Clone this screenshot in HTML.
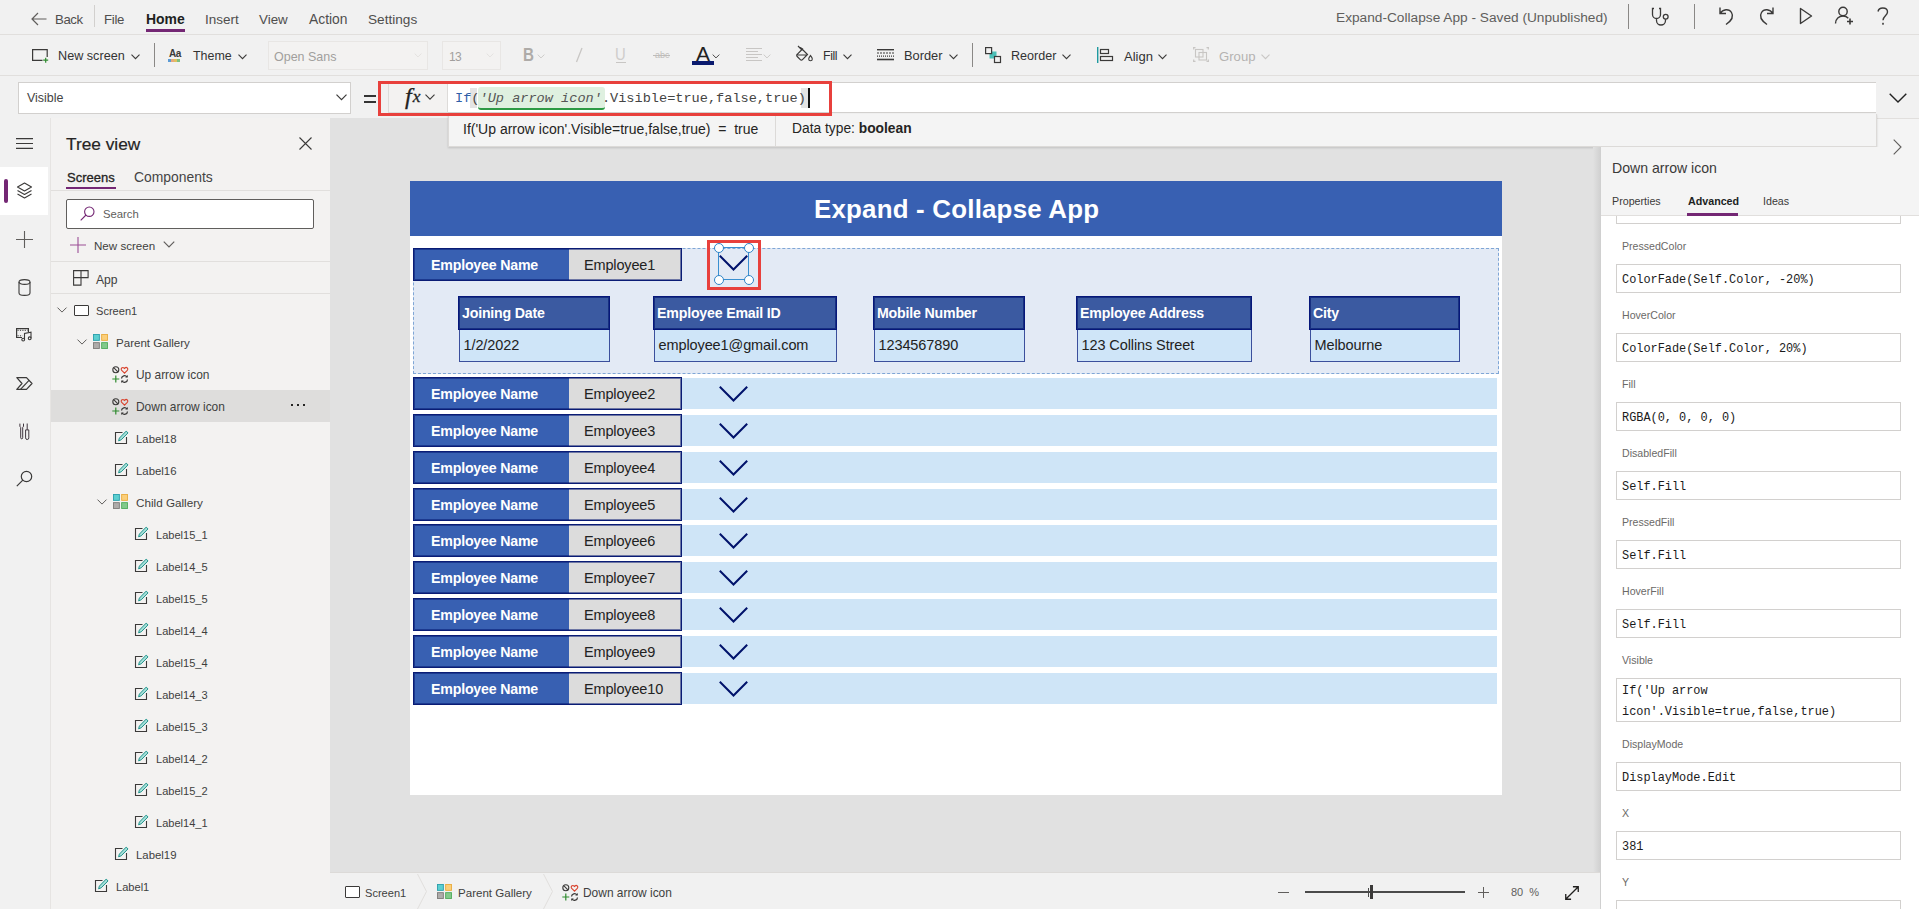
<!DOCTYPE html>
<html>
<head>
<meta charset="utf-8">
<title>Power Apps</title>
<style>
*{box-sizing:border-box;margin:0;padding:0}
html,body{width:1919px;height:909px;overflow:hidden;background:#e1e1e1;font-family:"Liberation Sans",sans-serif;color:#333}
.abs{position:absolute}
#root{position:relative;width:1919px;height:909px;overflow:hidden}
/* top bars */
#topbar{left:0;top:0;width:1919px;height:35px;background:#f1f1f1;border-bottom:1px solid #e1dfdd}
#ribbon{left:0;top:35px;width:1919px;height:41px;background:#f1f1f1;border-bottom:1px solid #e1dfdd}
#fbar{left:0;top:76px;width:1919px;height:42px;background:#f1f1f1}
.t{position:absolute;white-space:nowrap;line-height:1}
.menu{font-size:14px;color:#4f4e4d;top:12.5px}
.rib{font-size:13px;color:#333;top:49.5px}
.dis{color:#b5b3b1}
svg{position:absolute;overflow:visible}
/* left */
#rail{left:0;top:118px;width:50px;height:791px;background:#f1f1f1}
#tree{left:50px;top:118px;width:280px;height:791px;background:#f3f2f1;border-left:1px solid #e6e4e2}
.tn{font-size:11.4px;color:#403f3e;margin-top:1.700px}
/* canvas */
#stage{left:330px;top:118px;width:1270px;height:755px;background:#e1e1e1}
#app{left:410px;top:181px;width:1092px;height:614px;background:#fff}
#apphdr{left:410px;top:181px;width:1092px;height:55px;background:#3860b2}
.row{position:absolute;left:416px;width:1081px;height:31px;background:#cfe5f7}
.en{position:absolute;left:413px;width:269px;height:33px;border:1px solid #0a1c75;background:#dcdcdc}
.en:after{content:"";position:absolute;left:0;top:0;right:0;bottom:0;box-shadow:inset 0 0 0 1px rgba(0,18,107,.5)}
.en .l{position:absolute;left:0;top:0;width:155px;height:31px;background:#3860b2;color:#fff;font-weight:bold;font-size:14.2px;line-height:32px;padding-left:17px;letter-spacing:-0.2px}
.en .v{position:absolute;left:155px;top:0;width:112px;height:31px;color:#222;font-size:14.5px;line-height:32px;padding-left:15px;letter-spacing:-0.15px}
.card{position:absolute;height:66px}
.card .h{position:absolute;left:0;top:0;right:0;height:34px;background:#3b5aa1;border:1px solid #06177a;box-shadow:inset 0 0 0 1px rgba(0,18,107,.6);color:#fff;font-weight:bold;font-size:14.2px;line-height:33px;padding-left:3px;letter-spacing:-0.2px}
.card .b{position:absolute;left:.5px;top:34px;right:0;height:32px;background:#cfe5f8;border:1.300px solid #3b4f9c;border-top:none;color:#222;font-size:14.5px;line-height:30px;padding-left:4px;letter-spacing:-0.1px}
/* right panel */
#rp{left:1600px;top:147px;width:319px;height:762px;background:#fff;border-left:1px solid #d8d6d4}
#rph{left:1601px;top:147px;width:318px;height:69px;background:#f4f4f4;border-bottom:1px solid #e1dfdd}
.pl{position:absolute;left:1622px;font-size:10.6px;color:#6b6967;white-space:nowrap;line-height:1;margin-top:1px}
.pi{position:absolute;left:1616px;width:285px;height:29px;border:1px solid #d2d0ce;background:#fff;font-family:"Liberation Mono",monospace;font-size:11.9px;color:#1b1b1b;line-height:31px;padding-left:5px;white-space:nowrap}
/* bottom */
#bbar{left:330px;top:872px;width:1270px;height:37px;background:#f1f1f1;border-top:1px solid #dcdad8}
</style>
</head>
<body>
<div id="root">

<!-- ===== STAGE ===== -->
<div id="stage" class="abs"></div>
<div id="app" class="abs"></div>
<div id="apphdr" class="abs"></div>
<div class="t" style="left:814px;top:197px;font-size:25.900px;font-weight:bold;color:#fff;letter-spacing:.2px">Expand - Collapse App</div>
<div class="abs" style="left:413px;top:248px;width:1086px;height:126px;background:#e3eaf5;border:1px dashed #7fa6d6"></div>
<div class="row" style="top:378px"></div>
<div class="row" style="top:415px"></div>
<div class="row" style="top:452px"></div>
<div class="row" style="top:489px"></div>
<div class="row" style="top:525px"></div>
<div class="row" style="top:562px"></div>
<div class="row" style="top:599px"></div>
<div class="row" style="top:636px"></div>
<div class="row" style="top:673px"></div>
<div class="en" style="top:248px"><div class="l">Employee Name</div><div class="v">Employee1</div></div>
<div class="en" style="top:377px"><div class="l">Employee Name</div><div class="v">Employee2</div></div>
<svg style="left:719px;top:386px" width="29" height="16" viewBox="0 0 29 16"><path d="M.8.800L14.500 14.500 28.200.8" fill="none" stroke="#00126b" stroke-width="2"/></svg>
<div class="en" style="top:414px"><div class="l">Employee Name</div><div class="v">Employee3</div></div>
<svg style="left:719px;top:423px" width="29" height="16" viewBox="0 0 29 16"><path d="M.8.800L14.500 14.500 28.200.8" fill="none" stroke="#00126b" stroke-width="2"/></svg>
<div class="en" style="top:451px"><div class="l">Employee Name</div><div class="v">Employee4</div></div>
<svg style="left:719px;top:460px" width="29" height="16" viewBox="0 0 29 16"><path d="M.8.800L14.500 14.500 28.200.8" fill="none" stroke="#00126b" stroke-width="2"/></svg>
<div class="en" style="top:488px"><div class="l">Employee Name</div><div class="v">Employee5</div></div>
<svg style="left:719px;top:497px" width="29" height="16" viewBox="0 0 29 16"><path d="M.8.800L14.500 14.500 28.200.8" fill="none" stroke="#00126b" stroke-width="2"/></svg>
<div class="en" style="top:524px"><div class="l">Employee Name</div><div class="v">Employee6</div></div>
<svg style="left:719px;top:533px" width="29" height="16" viewBox="0 0 29 16"><path d="M.8.800L14.500 14.500 28.200.8" fill="none" stroke="#00126b" stroke-width="2"/></svg>
<div class="en" style="top:561px"><div class="l">Employee Name</div><div class="v">Employee7</div></div>
<svg style="left:719px;top:570px" width="29" height="16" viewBox="0 0 29 16"><path d="M.8.800L14.500 14.500 28.200.8" fill="none" stroke="#00126b" stroke-width="2"/></svg>
<div class="en" style="top:598px"><div class="l">Employee Name</div><div class="v">Employee8</div></div>
<svg style="left:719px;top:607px" width="29" height="16" viewBox="0 0 29 16"><path d="M.8.800L14.500 14.500 28.200.8" fill="none" stroke="#00126b" stroke-width="2"/></svg>
<div class="en" style="top:635px"><div class="l">Employee Name</div><div class="v">Employee9</div></div>
<svg style="left:719px;top:644px" width="29" height="16" viewBox="0 0 29 16"><path d="M.8.800L14.500 14.500 28.200.8" fill="none" stroke="#00126b" stroke-width="2"/></svg>
<div class="en" style="top:672px"><div class="l">Employee Name</div><div class="v">Employee10</div></div>
<svg style="left:719px;top:681px" width="29" height="16" viewBox="0 0 29 16"><path d="M.8.800L14.500 14.500 28.200.8" fill="none" stroke="#00126b" stroke-width="2"/></svg>
<div class="card" style="left:458px;top:296px;width:152px"><div class="h">Joining Date</div><div class="b">1/2/2022</div></div>
<div class="card" style="left:653px;top:296px;width:184px"><div class="h">Employee Email ID</div><div class="b">employee1@gmail.com</div></div>
<div class="card" style="left:873px;top:296px;width:152px"><div class="h">Mobile Number</div><div class="b">1234567890</div></div>
<div class="card" style="left:1076px;top:296px;width:176px"><div class="h">Employee Address</div><div class="b">123 Collins Street</div></div>
<div class="card" style="left:1309px;top:296px;width:151px"><div class="h">City</div><div class="b">Melbourne</div></div>
<svg style="left:719px;top:255px" width="29" height="16" viewBox="0 0 29 16"><path d="M.8.800L14.500 14.500 28.200.8" fill="none" stroke="#00126b" stroke-width="2"/></svg>
<div class="abs" style="left:718px;top:247px;width:31px;height:33px;border:1px solid #3a8fd0"></div>
<div class="abs" style="left:713.5px;top:243.0px;width:10px;height:10px;border-radius:50%;background:#fff;border:1.300px solid #2f84c8"></div>
<div class="abs" style="left:744.0px;top:243.0px;width:10px;height:10px;border-radius:50%;background:#fff;border:1.300px solid #2f84c8"></div>
<div class="abs" style="left:713.5px;top:275.0px;width:10px;height:10px;border-radius:50%;background:#fff;border:1.300px solid #2f84c8"></div>
<div class="abs" style="left:744.0px;top:275.0px;width:10px;height:10px;border-radius:50%;background:#fff;border:1.300px solid #2f84c8"></div>
<div class="abs" style="left:707px;top:240px;width:54px;height:50px;border:3px solid #e8403c"></div>
<!-- STAGE-END -->

<!-- ===== TOP BAR ===== -->
<div id="topbar" class="abs"></div>
<div id="ribbon" class="abs"></div>
<div id="fbar" class="abs"></div>
<!-- topbar items -->
<svg style="left:31px;top:12px" width="16" height="14" viewBox="0 0 16 14"><path d="M15.5 7H1M7 1L1 7l6 6" fill="none" stroke="#605e5c" stroke-width="1.2"/></svg>
<div class="t menu" style="left:55px;font-size:13.2px;letter-spacing:-.4px">Back</div>
<div class="abs" style="left:94px;top:5px;width:1px;height:22px;background:#d2d0ce"></div>
<div class="t menu" style="left:104px;font-size:13.2px;letter-spacing:-.3px">File</div>
<div class="t menu" style="left:146px;font-weight:bold;color:#201f1e;font-size:13.94px">Home</div>
<div class="abs" style="left:146px;top:29px;width:39px;height:3px;background:#742774"></div>
<div class="t menu" style="left:205px;font-size:13.49px">Insert</div>
<div class="t menu" style="left:259px;font-size:13.37px">View</div>
<div class="t menu" style="left:309px;font-size:13.85px">Action</div>
<div class="t menu" style="left:368px;font-size:13.63px">Settings</div>
<div class="t menu" style="left:1336px;top:10.500px;color:#605e5c;font-size:13.700px">Expand-Collapse App - Saved (Unpublished)</div>
<div class="abs" style="left:1628px;top:4px;width:1px;height:25px;background:#8a8886"></div>
<div class="abs" style="left:1694px;top:4px;width:1px;height:25px;background:#8a8886"></div>
<!-- stethoscope -->
<svg style="left:1651px;top:7px" width="22" height="20" viewBox="0 0 22 20"><path d="M3 1.5H1.5V7.5a4 4 0 0 0 8 0V1.5H8M5.5 11.5v2a4.5 4.5 0 0 0 9 0v-1.2" fill="none" stroke="#3b3a39" stroke-width="1.3"/><circle cx="14.7" cy="9.8" r="2.4" fill="none" stroke="#3b3a39" stroke-width="1.3"/></svg>
<!-- undo -->
<svg style="left:1718px;top:6px" width="18" height="20" viewBox="0 0 18 20"><path d="M2 1.5v6h6M2 7.5C5 3 11 2.500 13.500 6.500S13 15 8 18.500" fill="none" stroke="#3b3a39" stroke-width="1.4"/></svg>
<!-- redo -->
<svg style="left:1757px;top:6px" width="18" height="20" viewBox="0 0 18 20"><path d="M16 1.5v6h-6M16 7.5C13 3 7 2.500 4.500 6.500S5 15 10 18.500" fill="none" stroke="#3b3a39" stroke-width="1.4"/></svg>
<!-- play -->
<svg style="left:1799px;top:7px" width="14" height="18" viewBox="0 0 14 18"><path d="M1.500 1.500L12.500 9 1.500 16.500z" fill="none" stroke="#3b3a39" stroke-width="1.4" stroke-linejoin="round"/></svg>
<!-- user+ -->
<svg style="left:1834px;top:6px" width="22" height="20" viewBox="0 0 22 20"><circle cx="9" cy="5.500" r="4.200" fill="none" stroke="#3b3a39" stroke-width="1.4"/><path d="M1.500 17.500c0-4.500 3.500-7.500 7.500-7.500 2.200 0 4 .8 5.300 2.200" fill="none" stroke="#3b3a39" stroke-width="1.400"/><path d="M16 12.500v6M13 15.500h6" fill="none" stroke="#3b3a39" stroke-width="1.600"/></svg>
<svg style="left:1877px;top:7px" width="12" height="19" viewBox="0 0 12 19"><path d="M1 4.500C1.500 2 3.500 1 5.800 1c2.700 0 4.700 1.600 4.700 4 0 3.500-4.500 4-4.500 8.300" fill="none" stroke="#3b3a39" stroke-width="1.400"/><rect x="5.200" y="15.800" width="1.600" height="1.900" fill="#3b3a39"/></svg>

<!-- ribbon items -->
<svg style="left:32px;top:49px" width="17" height="14" viewBox="0 0 17 14"><path d="M10.500 11.400H.6V.6h14.600v7.500" fill="none" stroke="#3b3a39" stroke-width="1.200"/><path d="M13.700 8.700v5M11.200 11.200h5" stroke="#2e8b2e" stroke-width="1.200" fill="none"/></svg>
<div class="t rib" style="left:58px;font-size:12.65px">New screen</div>
<svg class="chev" style="left:131px;top:54px" width="9" height="6" viewBox="0 0 9 6"><path d="M.5.700l4 4 4-4" fill="none" stroke="#3b3a39" stroke-width="1.100"/></svg>
<div class="abs" style="left:154px;top:43px;width:1px;height:24px;background:#8a8886"></div>
<div class="t" style="left:169px;top:49px;font-size:10px;font-weight:bold;color:#3b3a39;letter-spacing:-.5px">Aa</div>
<div class="abs" style="left:168px;top:59px;width:3px;height:2.500px;background:#5b9bd5"></div><div class="abs" style="left:171px;top:59px;width:3px;height:2.500px;background:#e8a87c"></div><div class="abs" style="left:174px;top:59px;width:3px;height:2.500px;background:#e0c060"></div><div class="abs" style="left:177px;top:59px;width:3px;height:2.500px;background:#7fbf7f"></div>
<div class="t rib" style="left:193px;font-size:12.45px">Theme</div>
<svg style="left:238px;top:54px" width="9" height="6" viewBox="0 0 9 6"><path d="M.5.700l4 4 4-4" fill="none" stroke="#3b3a39" stroke-width="1.100"/></svg>
<div class="abs" style="left:268px;top:41px;width:160px;height:29px;background:#f3f2f1;border:1px solid #e8e6e4"></div>
<div class="t rib" style="left:274px;top:50.500px;color:#a19f9d;font-size:12.49px">Open Sans</div>
<svg style="left:414px;top:53px" width="8" height="5" viewBox="0 0 9 6"><path d="M.5.700l4 4 4-4" fill="none" stroke="#e1dfdd" stroke-width="1.100"/></svg>
<div class="abs" style="left:442px;top:41px;width:59px;height:29px;background:#f3f2f1;border:1px solid #e8e6e4"></div>
<div class="t rib" style="left:449px;top:50.500px;color:#a19f9d;font-size:12px;letter-spacing:-.6px">13</div>
<svg style="left:486px;top:53px" width="8" height="5" viewBox="0 0 9 6"><path d="M.5.700l4 4 4-4" fill="none" stroke="#e1dfdd" stroke-width="1.100"/></svg>
<div class="t" style="left:523px;top:46px;font-size:18.500px;color:#aeaba8;font-weight:bold;transform:scaleX(.82);transform-origin:left">B</div>
<svg style="left:537px;top:54px" width="8" height="5" viewBox="0 0 9 6"><path d="M.5.700l4 4 4-4" fill="none" stroke="#c8c6c4" stroke-width="1.100"/></svg>
<svg style="left:574px;top:47px" width="10" height="16" viewBox="0 0 10 16"><path d="M8 1L2.500 15" stroke="#c8c6c4" stroke-width="1.300" fill="none"/></svg>
<div class="t" style="left:615px;top:46px;font-size:16.500px;color:#cfcdcb;transform:scaleX(.9);transform-origin:left">U</div>
<div class="abs" style="left:616px;top:62px;width:10px;height:1px;background:#c8c6c4"></div>
<div class="t" style="left:655px;top:51px;font-size:9px;color:#bebcba;text-decoration:line-through">abc</div><div class="abs" style="left:653px;top:55px;width:17px;height:1px;background:#bebcba"></div>
<div class="t" style="left:696px;top:43px;font-size:21px;color:#222">A</div>
<div class="abs" style="left:692px;top:61px;width:22px;height:4px;background:#0a1a6e"></div>
<svg style="left:712px;top:54px" width="8" height="5" viewBox="0 0 9 6"><path d="M.5.700l4 4 4-4" fill="none" stroke="#3b3a39" stroke-width="1.100"/></svg>
<svg style="left:746px;top:48px" width="17" height="13" viewBox="0 0 17 13"><path d="M0 .5h16M0 3.500h12M0 6.500h16M0 9.500h12M0 12.500h16" stroke="#c8c6c4" stroke-width="1" fill="none"/></svg>
<svg style="left:763px;top:54px" width="8" height="5" viewBox="0 0 9 6"><path d="M.5.700l4 4 4-4" fill="none" stroke="#c8c6c4" stroke-width="1.100"/></svg>
<!-- fill -->
<svg style="left:796px;top:45px" width="18" height="17" viewBox="0 0 18 17"><path d="M4.500 2.500l7 7-5 5.200a1.500 1.500 0 0 1-2.200 0L1.200 11.500a1.500 1.500 0 0 1 0-2.200L7 3.500M2 1l4 4M1.500 10h9" fill="none" stroke="#3b3a39" stroke-width="1.200"/><path d="M14.500 10.500c1 1.500 1.800 2.500 1.800 3.500a1.800 1.800 0 0 1-3.600 0c0-1 .8-2 1.800-3.500z" fill="none" stroke="#3b3a39" stroke-width="1.100"/></svg>
<div class="t rib" style="left:823px;font-size:12.4px;letter-spacing:-.4px">Fill</div>
<svg style="left:843px;top:54px" width="9" height="6" viewBox="0 0 9 6"><path d="M.5.700l4 4 4-4" fill="none" stroke="#3b3a39" stroke-width="1.100"/></svg>
<!-- border -->
<svg style="left:877px;top:49px" width="17" height="12" viewBox="0 0 17 12"><path d="M0 .7h17" stroke="#3b3a39" stroke-width="1.400"/><path d="M0 4h17" stroke="#3b3a39" stroke-width="1.200" stroke-dasharray="2 1"/><path d="M0 7.200h17" stroke="#3b3a39" stroke-width="1.200" stroke-dasharray="1 1"/><path d="M0 10.500h17" stroke="#3b3a39" stroke-width="1.600"/></svg>
<div class="t rib" style="left:904px;font-size:12.82px">Border</div>
<svg style="left:949px;top:54px" width="9" height="6" viewBox="0 0 9 6"><path d="M.5.700l4 4 4-4" fill="none" stroke="#3b3a39" stroke-width="1.100"/></svg>
<div class="abs" style="left:972px;top:43px;width:1px;height:24px;background:#8a8886"></div>
<!-- reorder -->
<svg style="left:985px;top:47px" width="17" height="16" viewBox="0 0 17 16"><rect x="4.500" y="4.500" width="7" height="7" fill="#4cc0b8"/><rect x=".6" y=".6" width="6" height="6" fill="#f1f1f1" stroke="#3b3a39" stroke-width="1.200"/><rect x="9.500" y="9.500" width="6" height="6" fill="#f1f1f1" stroke="#3b3a39" stroke-width="1.200"/></svg>
<div class="t rib" style="left:1011px;font-size:12.59px">Reorder</div>
<svg style="left:1062px;top:54px" width="9" height="6" viewBox="0 0 9 6"><path d="M.5.700l4 4 4-4" fill="none" stroke="#3b3a39" stroke-width="1.100"/></svg>
<!-- align -->
<svg style="left:1097px;top:47px" width="17" height="16" viewBox="0 0 17 16"><path d="M.7 0v16" stroke="#1f9aa0" stroke-width="1.400"/><rect x="3.500" y="2.500" width="8" height="4" fill="none" stroke="#3b3a39" stroke-width="1.200"/><rect x="3.500" y="9.500" width="12" height="4" fill="none" stroke="#3b3a39" stroke-width="1.200"/></svg>
<div class="t rib" style="left:1124px;font-size:13.04px">Align</div>
<svg style="left:1158px;top:54px" width="9" height="6" viewBox="0 0 9 6"><path d="M.5.700l4 4 4-4" fill="none" stroke="#3b3a39" stroke-width="1.100"/></svg>
<!-- group -->
<svg style="left:1193px;top:47px" width="17" height="16" viewBox="0 0 17 16"><path d="M0 .7h2.500M.7 0v2.500M13.500.7H16M15.300 0v2.500M0 14.300h2.500M.7 12.500V15M13.500 14.300H16M15.300 12.500V15" stroke="#c8c6c4" stroke-width="1.200" fill="none"/><rect x="2.500" y="2.500" width="7.500" height="7.500" fill="none" stroke="#c8c6c4" stroke-width="1.100"/><rect x="6" y="5.500" width="7.500" height="7.500" fill="none" stroke="#c8c6c4" stroke-width="1.100"/></svg>
<div class="t rib dis" style="left:1219px;font-size:13.13px">Group</div>
<svg style="left:1261px;top:54px" width="9" height="6" viewBox="0 0 9 6"><path d="M.5.700l4 4 4-4" fill="none" stroke="#c8c6c4" stroke-width="1.100"/></svg>

<!-- formula bar -->
<div class="abs" style="left:18px;top:82px;width:333px;height:32px;background:#fff;border:1px solid #d2d0ce"></div>
<div class="t" style="left:27px;top:92px;color:#444;font-size:12.46px">Visible</div>
<svg style="left:336px;top:94px" width="11" height="7" viewBox="0 0 11 7"><path d="M.5.700l5 5 5-5" fill="none" stroke="#3b3a39" stroke-width="1.200"/></svg>
<div class="abs" style="left:364px;top:95px;width:12px;height:2px;background:#333"></div>
<div class="abs" style="left:364px;top:101px;width:12px;height:2px;background:#333"></div>
<div class="abs" style="left:388px;top:82px;width:1488px;height:31px;background:#fff;border-top:1px solid #d2d0ce;border-bottom:1px solid #d2d0ce"></div>
<div class="abs" style="left:388px;top:82px;width:60px;height:31px;background:#f3f2f1;border:1px solid #dddbd9"></div>
<div class="t" style="left:405px;top:84px;font-size:24px;font-style:italic;font-family:'Liberation Serif',serif;color:#222;-webkit-text-stroke:.3px #222">f<span style="font-size:17.500px;position:relative;top:-2px;left:1px">x</span></div>
<svg style="left:425px;top:94px" width="10" height="6" viewBox="0 0 10 6"><path d="M.5.700l4.500 4.500L9.500.7" fill="none" stroke="#3b3a39" stroke-width="1.100"/></svg>
<div class="abs" style="left:470px;top:88px;width:7px;height:20px;background:#e4e4e4"></div>
<div class="abs" style="left:801px;top:88px;width:7px;height:20px;background:#e4e4e4"></div>
<div class="abs" style="left:478px;top:87px;width:127px;height:23px;background:#dff0e0;border-radius:3px;border-bottom:2px solid #2c9a44"></div>
<div class="t" style="left:455px;top:92px;font-size:13.600px;font-family:'Liberation Mono',monospace;color:#444"><span style="color:#2f5fa8">If</span>(<i style="color:#555">'Up arrow icon'</i>.Visible=true,false,true)</div>
<div class="abs" style="left:808px;top:88px;width:2px;height:20px;background:#111"></div>
<div class="abs" style="left:1876px;top:118px;width:43px;height:30px;background:#f4f4f4;border-top:1px solid #e1dfdd"></div>
<!-- result strip -->
<div class="abs" style="left:448px;top:114px;width:1429px;height:33px;background:#f4f4f4;border:1px solid #dcdad8;border-top:none;box-shadow:0 1px 2px rgba(0,0,0,.15)"></div>
<div class="abs" style="left:775px;top:114px;width:1px;height:32px;background:#dcdad8"></div>
<div class="t" style="left:463px;top:122px;font-size:14px;color:#252423">If('Up arrow icon'.Visible=true,false,true)&nbsp; =&nbsp; true</div>
<div class="t" style="left:792px;top:122px;font-size:13.800px;color:#252423">Data type: <b>boolean</b></div>
<div class="abs" style="left:378px;top:81px;width:454px;height:35px;border:3px solid #e8403c"></div>
<svg style="left:1889px;top:93px" width="18" height="10" viewBox="0 0 18 10"><path d="M.7.700L9 9 17.300.7" fill="none" stroke="#222" stroke-width="1.400"/></svg>


<!-- ===== LEFT ===== -->
<div id="rail" class="abs"></div>
<div id="tree" class="abs"></div>
<svg style="left:16px;top:138px" width="17" height="11" viewBox="0 0 17 11"><path d="M0 .6h17M0 5.500h17M0 10.400h17" stroke="#3b3a39" stroke-width="1.100"/></svg>
<div class="abs" style="left:0;top:167px;width:48px;height:48px;background:#fff"></div>
<div class="abs" style="left:4px;top:179px;width:4px;height:24px;background:#742774;border-radius:2px"></div>
<svg style="left:16px;top:182px" width="17" height="18" viewBox="0 0 17 18"><path d="M8.500 1L15.500 5 8.500 9 1.500 5z" fill="none" stroke="#3b3a39" stroke-width="1.100" stroke-linejoin="round"/><path d="M1.500 8.500L8.500 12.500 15.500 8.500M1.500 12L8.500 16 15.500 12" fill="none" stroke="#3b3a39" stroke-width="1.100" stroke-linejoin="round"/></svg>
<svg style="left:16px;top:231px" width="17" height="17" viewBox="0 0 17 17"><path d="M8.500 0v17M0 8.500h17" stroke="#605e5c" stroke-width="1.100"/></svg>
<svg style="left:18px;top:279px" width="13" height="17" viewBox="0 0 13 17"><ellipse cx="6.500" cy="3" rx="5.500" ry="2.400" fill="none" stroke="#3b3a39" stroke-width="1.100"/><path d="M1 3v11c0 1.300 2.500 2.400 5.500 2.400s5.500-1.100 5.500-2.400V3" fill="none" stroke="#3b3a39" stroke-width="1.100"/></svg>
<svg style="left:16px;top:328px" width="17" height="14" viewBox="0 0 17 14"><path d="M6 9.500H.6V.6h11.800V4" fill="none" stroke="#3b3a39" stroke-width="1.200"/><path d="M1.500 2.300h10M1.500 7.800h5" stroke="#3b3a39" stroke-width="1" stroke-dasharray="1.200 1.200"/><path d="M8.500 11.500V5.500l6.500-1.300v6" fill="none" stroke="#3b3a39" stroke-width="1.100"/><circle cx="7.200" cy="11.600" r="1.400" fill="none" stroke="#3b3a39" stroke-width="1.100"/><circle cx="13.700" cy="10.300" r="1.400" fill="none" stroke="#3b3a39" stroke-width="1.100"/></svg>
<svg style="left:16px;top:377px" width="17" height="13" viewBox="0 0 17 13"><path d="M.8.600H10.500L16 6.500 10.500 12.400H.8L6 6.500z" fill="none" stroke="#3b3a39" stroke-width="1.200" stroke-linejoin="round"/><path d="M13 3.300L4.500 12.400" fill="none" stroke="#3b3a39" stroke-width="1.200"/></svg>
<svg style="left:19px;top:423px" width="11" height="17" viewBox="0 0 11 17"><path d="M.9.600v2.400a1.900 1.900 0 0 0 .800 1.500v10.300a1 1 0 0 0 2 0V4.500a1.900 1.900 0 0 0 .800-1.500V.6" fill="none" stroke="#40363f" stroke-width="1"/><path d="M8.200.5v6.300M6.600 6.900h3.200v8a1.600 1.600 0 0 1-3.200 0z" fill="none" stroke="#40363f" stroke-width="1"/></svg>
<svg style="left:16px;top:470px" width="17" height="17" viewBox="0 0 17 17"><circle cx="10.500" cy="6.500" r="5.200" fill="none" stroke="#3b3a39" stroke-width="1.200"/><path d="M6.800 10.200L.8 16.200" stroke="#3b3a39" stroke-width="1.200"/></svg>
<div class="t" style="left:66px;top:136px;font-size:17.300px;color:#252423;-webkit-text-stroke:.2px #252423">Tree view</div>
<svg style="left:299px;top:137px" width="13" height="13" viewBox="0 0 13 13"><path d="M.5.500l12 12M12.500.5l-12 12" stroke="#3b3a39" stroke-width="1.100"/></svg>
<div class="t" style="left:67px;top:171px;font-size:13px;color:#252423;-webkit-text-stroke:.3px #252423">Screens</div>
<div class="abs" style="left:66px;top:187px;width:50px;height:2px;background:#742774"></div>
<div class="t" style="left:134px;top:171px;font-size:13.900px;color:#444">Components</div>
<div class="abs" style="left:51px;top:190px;width:279px;height:1px;background:#e1dfdd"></div>
<div class="abs" style="left:66px;top:199px;width:248px;height:30px;background:#fff;border:1px solid #605e5c;border-radius:2px"></div>
<svg style="left:80px;top:206px" width="15" height="15" viewBox="0 0 15 15"><circle cx="9.300" cy="5.700" r="4.700" fill="none" stroke="#742774" stroke-width="1.100"/><path d="M6 9L.7 14.300" stroke="#742774" stroke-width="1.100"/></svg>
<div class="t" style="left:103px;top:209px;font-size:11.300px;color:#605e5c">Search</div>
<svg style="left:70px;top:237px" width="16" height="16" viewBox="0 0 16 16"><path d="M8 0v16M0 8h16" stroke="#9b4f96" stroke-width="1.100"/></svg>
<div class="t tn" style="left:94px;top:238px;font-size:11.6px">New screen</div>
<svg style="left:163px;top:241px" width="12" height="7" viewBox="0 0 10 6"><path d="M.5.600l4.500 4.500L9.500.6" fill="none" stroke="#605e5c" stroke-width="1"/></svg>
<div class="abs" style="left:51px;top:261px;width:279px;height:1px;background:#e1dfdd"></div>
<svg style="left:73px;top:270px" width="16" height="16" viewBox="0 0 16 16"><path d="M.6.600h14.500v7H8v7.500H.6zM8 .6v7M.6 7.600H8" fill="none" stroke="#3b3a39" stroke-width="1.100"/></svg>
<div class="t tn" style="left:96px;top:272px;font-size:12.14px">App</div>
<div class="abs" style="left:51px;top:293px;width:279px;height:1px;background:#e1dfdd"></div>
<div class="abs" style="left:51px;top:390px;width:279px;height:32px;background:#dedddc"></div>
<div class="abs" style="left:291px;top:404px;width:2px;height:2px;background:#252423"></div><div class="abs" style="left:297px;top:404px;width:2px;height:2px;background:#252423"></div><div class="abs" style="left:303px;top:404px;width:2px;height:2px;background:#252423"></div>
<svg style="left:57px;top:307px" width="10" height="6" viewBox="0 0 10 6"><path d="M.5.600l4.500 4.500L9.500.6" fill="none" stroke="#605e5c" stroke-width="1"/></svg>
<div class="abs" style="left:74px;top:305px;width:15px;height:11px;border:1.200px solid #3b3a39;border-radius:1px;background:#fff"></div>
<div class="t tn" style="left:96px;top:304px;font-size:11.09px">Screen1</div>
<svg style="left:77px;top:339px" width="10" height="6" viewBox="0 0 10 6"><path d="M.5.600l4.500 4.500L9.500.6" fill="none" stroke="#605e5c" stroke-width="1"/></svg>
<svg style="left:93px;top:334px" width="15" height="15" viewBox="0 0 15.500 15.500"><rect x="0" y="0" width="7" height="7" fill="#5ccfd0"/><rect x="8.500" y="0" width="7" height="7" fill="#fbcf7a"/><rect x="0" y="8.500" width="7" height="7" fill="#aeacaa"/><rect x="8.500" y="8.500" width="7" height="7" fill="#82c98a"/><rect x=".5" y=".5" width="6" height="6" fill="none" stroke="#2a9aa8" stroke-width=".8"/><rect x="9" y=".5" width="6" height="6" fill="none" stroke="#e5a83a" stroke-width=".8"/><rect x=".5" y="9" width="6" height="6" fill="none" stroke="#7a7876" stroke-width=".8"/><rect x="9" y="9" width="6" height="6" fill="none" stroke="#4fa85a" stroke-width=".8"/></svg>
<div class="t tn" style="left:116px;top:336px;font-size:11.57px">Parent Gallery</div>
<svg style="left:112px;top:366px" width="17" height="17" viewBox="0 0 17 17"><circle cx="3.800" cy="3.800" r="3" fill="none" stroke="#3b3a39" stroke-width="1.100"/><path d="M1.700 1.700l4.200 4.200" stroke="#3b3a39" stroke-width="1.100"/><path d="M12.500 7.200L9.700 4.300a1.600 1.600 0 0 1 2.300-2.300l.5.500.5-.5a1.600 1.600 0 0 1 2.300 2.300z" fill="none" stroke="#d8442f" stroke-width="1.100"/><path d="M3.800 9.500v7M.3 13h7" stroke="#2e8b2e" stroke-width="1.200"/><path d="M9.500 12.500a3 3 0 0 1 5.500-1.500M15.500 13.500a3 3 0 0 1-5.500 1.500" fill="none" stroke="#3b3a39" stroke-width="1.300"/><path d="M15.800 9v2.600h-2.600zM9.200 17v-2.600h2.600z" fill="#3b3a39"/></svg>
<div class="t tn" style="left:136px;top:368px;font-size:11.92px">Up arrow icon</div>
<svg style="left:112px;top:398px" width="17" height="17" viewBox="0 0 17 17"><circle cx="3.800" cy="3.800" r="3" fill="none" stroke="#3b3a39" stroke-width="1.100"/><path d="M1.700 1.700l4.200 4.200" stroke="#3b3a39" stroke-width="1.100"/><path d="M12.500 7.200L9.700 4.300a1.600 1.600 0 0 1 2.300-2.300l.5.500.5-.5a1.600 1.600 0 0 1 2.300 2.300z" fill="none" stroke="#d8442f" stroke-width="1.100"/><path d="M3.800 9.500v7M.3 13h7" stroke="#2e8b2e" stroke-width="1.200"/><path d="M9.500 12.500a3 3 0 0 1 5.500-1.500M15.500 13.500a3 3 0 0 1-5.500 1.500" fill="none" stroke="#3b3a39" stroke-width="1.300"/><path d="M15.800 9v2.600h-2.600zM9.200 17v-2.600h2.600z" fill="#3b3a39"/></svg>
<div class="t tn" style="left:136px;top:400px;font-size:11.95px">Down arrow icon</div>
<svg style="left:114px;top:430px" width="15" height="15" viewBox="0 0 15 15"><path d="M8.500 2.500H1.500v11h11V7" fill="none" stroke="#3b3a39" stroke-width="1.100"/><path d="M4.600 10.800l.8-2.700L12.200 1.100l1.800 1.800-6.800 6.900z" fill="#a8e0d9" stroke="#1f948d" stroke-width="1" stroke-linejoin="round"/></svg>
<div class="t tn" style="left:136px;top:432px;font-size:11.39px">Label18</div>
<svg style="left:114px;top:462px" width="15" height="15" viewBox="0 0 15 15"><path d="M8.500 2.500H1.500v11h11V7" fill="none" stroke="#3b3a39" stroke-width="1.100"/><path d="M4.600 10.800l.8-2.700L12.200 1.100l1.800 1.800-6.800 6.900z" fill="#a8e0d9" stroke="#1f948d" stroke-width="1" stroke-linejoin="round"/></svg>
<div class="t tn" style="left:136px;top:464px;font-size:11.39px">Label16</div>
<svg style="left:97px;top:499px" width="10" height="6" viewBox="0 0 10 6"><path d="M.5.600l4.500 4.500L9.500.6" fill="none" stroke="#605e5c" stroke-width="1"/></svg>
<svg style="left:113px;top:494px" width="15" height="15" viewBox="0 0 15.500 15.500"><rect x="0" y="0" width="7" height="7" fill="#5ccfd0"/><rect x="8.500" y="0" width="7" height="7" fill="#fbcf7a"/><rect x="0" y="8.500" width="7" height="7" fill="#aeacaa"/><rect x="8.500" y="8.500" width="7" height="7" fill="#82c98a"/><rect x=".5" y=".5" width="6" height="6" fill="none" stroke="#2a9aa8" stroke-width=".8"/><rect x="9" y=".5" width="6" height="6" fill="none" stroke="#e5a83a" stroke-width=".8"/><rect x=".5" y="9" width="6" height="6" fill="none" stroke="#7a7876" stroke-width=".8"/><rect x="9" y="9" width="6" height="6" fill="none" stroke="#4fa85a" stroke-width=".8"/></svg>
<div class="t tn" style="left:136px;top:495px;font-size:11.7px">Child Gallery</div>
<svg style="left:134px;top:526px" width="15" height="15" viewBox="0 0 15 15"><path d="M8.500 2.500H1.500v11h11V7" fill="none" stroke="#3b3a39" stroke-width="1.100"/><path d="M4.600 10.800l.8-2.700L12.200 1.100l1.800 1.800-6.800 6.900z" fill="#a8e0d9" stroke="#1f948d" stroke-width="1" stroke-linejoin="round"/></svg>
<div class="t tn" style="left:156px;top:528px;font-size:11.07px">Label15_1</div>
<svg style="left:134px;top:558px" width="15" height="15" viewBox="0 0 15 15"><path d="M8.500 2.500H1.500v11h11V7" fill="none" stroke="#3b3a39" stroke-width="1.100"/><path d="M4.600 10.800l.8-2.700L12.200 1.100l1.800 1.800-6.800 6.900z" fill="#a8e0d9" stroke="#1f948d" stroke-width="1" stroke-linejoin="round"/></svg>
<div class="t tn" style="left:156px;top:560px;font-size:11.07px">Label14_5</div>
<svg style="left:134px;top:590px" width="15" height="15" viewBox="0 0 15 15"><path d="M8.500 2.500H1.500v11h11V7" fill="none" stroke="#3b3a39" stroke-width="1.100"/><path d="M4.600 10.800l.8-2.700L12.200 1.100l1.800 1.800-6.800 6.900z" fill="#a8e0d9" stroke="#1f948d" stroke-width="1" stroke-linejoin="round"/></svg>
<div class="t tn" style="left:156px;top:592px;font-size:11.07px">Label15_5</div>
<svg style="left:134px;top:622px" width="15" height="15" viewBox="0 0 15 15"><path d="M8.500 2.500H1.500v11h11V7" fill="none" stroke="#3b3a39" stroke-width="1.100"/><path d="M4.600 10.800l.8-2.700L12.200 1.100l1.800 1.800-6.800 6.900z" fill="#a8e0d9" stroke="#1f948d" stroke-width="1" stroke-linejoin="round"/></svg>
<div class="t tn" style="left:156px;top:624px;font-size:11.07px">Label14_4</div>
<svg style="left:134px;top:654px" width="15" height="15" viewBox="0 0 15 15"><path d="M8.500 2.500H1.500v11h11V7" fill="none" stroke="#3b3a39" stroke-width="1.100"/><path d="M4.600 10.800l.8-2.700L12.200 1.100l1.800 1.800-6.800 6.900z" fill="#a8e0d9" stroke="#1f948d" stroke-width="1" stroke-linejoin="round"/></svg>
<div class="t tn" style="left:156px;top:656px;font-size:11.07px">Label15_4</div>
<svg style="left:134px;top:686px" width="15" height="15" viewBox="0 0 15 15"><path d="M8.500 2.500H1.500v11h11V7" fill="none" stroke="#3b3a39" stroke-width="1.100"/><path d="M4.600 10.800l.8-2.700L12.200 1.100l1.800 1.800-6.800 6.900z" fill="#a8e0d9" stroke="#1f948d" stroke-width="1" stroke-linejoin="round"/></svg>
<div class="t tn" style="left:156px;top:688px;font-size:11.07px">Label14_3</div>
<svg style="left:134px;top:718px" width="15" height="15" viewBox="0 0 15 15"><path d="M8.500 2.500H1.500v11h11V7" fill="none" stroke="#3b3a39" stroke-width="1.100"/><path d="M4.600 10.800l.8-2.700L12.200 1.100l1.800 1.800-6.800 6.900z" fill="#a8e0d9" stroke="#1f948d" stroke-width="1" stroke-linejoin="round"/></svg>
<div class="t tn" style="left:156px;top:720px;font-size:11.07px">Label15_3</div>
<svg style="left:134px;top:750px" width="15" height="15" viewBox="0 0 15 15"><path d="M8.500 2.500H1.500v11h11V7" fill="none" stroke="#3b3a39" stroke-width="1.100"/><path d="M4.600 10.800l.8-2.700L12.200 1.100l1.800 1.800-6.800 6.900z" fill="#a8e0d9" stroke="#1f948d" stroke-width="1" stroke-linejoin="round"/></svg>
<div class="t tn" style="left:156px;top:752px;font-size:11.07px">Label14_2</div>
<svg style="left:134px;top:782px" width="15" height="15" viewBox="0 0 15 15"><path d="M8.500 2.500H1.500v11h11V7" fill="none" stroke="#3b3a39" stroke-width="1.100"/><path d="M4.600 10.800l.8-2.700L12.200 1.100l1.800 1.800-6.800 6.900z" fill="#a8e0d9" stroke="#1f948d" stroke-width="1" stroke-linejoin="round"/></svg>
<div class="t tn" style="left:156px;top:784px;font-size:11.07px">Label15_2</div>
<svg style="left:134px;top:814px" width="15" height="15" viewBox="0 0 15 15"><path d="M8.500 2.500H1.500v11h11V7" fill="none" stroke="#3b3a39" stroke-width="1.100"/><path d="M4.600 10.800l.8-2.700L12.200 1.100l1.800 1.800-6.800 6.900z" fill="#a8e0d9" stroke="#1f948d" stroke-width="1" stroke-linejoin="round"/></svg>
<div class="t tn" style="left:156px;top:816px;font-size:11.07px">Label14_1</div>
<svg style="left:114px;top:846px" width="15" height="15" viewBox="0 0 15 15"><path d="M8.500 2.500H1.500v11h11V7" fill="none" stroke="#3b3a39" stroke-width="1.100"/><path d="M4.600 10.800l.8-2.700L12.200 1.100l1.800 1.800-6.800 6.900z" fill="#a8e0d9" stroke="#1f948d" stroke-width="1" stroke-linejoin="round"/></svg>
<div class="t tn" style="left:136px;top:848px;font-size:11.39px">Label19</div>
<svg style="left:94px;top:878px" width="15" height="15" viewBox="0 0 15 15"><path d="M8.500 2.500H1.500v11h11V7" fill="none" stroke="#3b3a39" stroke-width="1.100"/><path d="M4.600 10.800l.8-2.700L12.200 1.100l1.800 1.800-6.800 6.900z" fill="#a8e0d9" stroke="#1f948d" stroke-width="1" stroke-linejoin="round"/></svg>
<div class="t tn" style="left:116px;top:880px;font-size:11.09px">Label1</div>

<!-- ===== RIGHT ===== -->
<div id="rp" class="abs"></div>
<div class="pi" style="top:195px"></div>
<div class="pl" style="top:240px">PressedColor</div>
<div class="pi" style="top:264px">ColorFade(Self.Color, -20%)</div>
<div class="pl" style="top:309px">HoverColor</div>
<div class="pi" style="top:333px">ColorFade(Self.Color, 20%)</div>
<div class="pl" style="top:378px">Fill</div>
<div class="pi" style="top:402px">RGBA(0, 0, 0, 0)</div>
<div class="pl" style="top:447px">DisabledFill</div>
<div class="pi" style="top:471px">Self.Fill</div>
<div class="pl" style="top:516px">PressedFill</div>
<div class="pi" style="top:540px">Self.Fill</div>
<div class="pl" style="top:585px">HoverFill</div>
<div class="pi" style="top:609px">Self.Fill</div>
<div class="pl" style="top:654px">Visible</div>
<div class="pi" style="top:678px;height:44px;line-height:21px;padding-top:2px;white-space:normal">If('Up arrow<br>icon'.Visible=true,false,true)</div>
<div class="pl" style="top:738px">DisplayMode</div>
<div class="pi" style="top:762px">DisplayMode.Edit</div>
<div class="pl" style="top:807px">X</div>
<div class="pi" style="top:831px">381</div>
<div class="pl" style="top:876px">Y</div>
<div class="pi" style="top:900px"></div>
<div id="rph" class="abs"></div>
<div class="abs" style="left:1593px;top:147px;width:8px;height:762px;background:linear-gradient(90deg,#e1e1e1,#cfcfcf)"></div>
<div class="t" style="left:1612px;top:161px;color:#3b3a39;font-size:14.1px">Down arrow icon</div>
<div class="t" style="left:1612px;top:196px;font-size:10.700px;color:#3b3a39">Properties</div>
<div class="t" style="left:1688px;top:196px;font-size:10.700px;color:#201f1e;font-weight:bold">Advanced</div>
<div class="abs" style="left:1687px;top:213px;width:51px;height:3px;background:#742774"></div>
<div class="t" style="left:1763px;top:196px;font-size:10.700px;color:#3b3a39">Ideas</div>

<svg style="left:1893px;top:139px" width="9" height="16" viewBox="0 0 9 16"><path d="M.7.700L8 8 .7 15.300" fill="none" stroke="#605e5c" stroke-width="1.100"/></svg>
<!-- ===== BOTTOM ===== -->
<div id="bbar" class="abs"></div>
<div class="abs" style="left:345px;top:886px;width:15px;height:12px;border:1.200px solid #3b3a39;border-radius:1px;background:#fff"></div>
<div class="t tn" style="left:365px;top:886px;font-size:11.09px">Screen1</div>
<svg style="left:417px;top:874px" width="10" height="35" viewBox="0 0 10 35"><path d="M.5 0L9.500 17.500.5 35" fill="none" stroke="#e1dfdd" stroke-width="1"/></svg>
<svg style="left:437px;top:884px" width="15" height="15" viewBox="0 0 15.500 15.500"><rect x="0" y="0" width="7" height="7" fill="#5ccfd0"/><rect x="8.500" y="0" width="7" height="7" fill="#fbcf7a"/><rect x="0" y="8.500" width="7" height="7" fill="#aeacaa"/><rect x="8.500" y="8.500" width="7" height="7" fill="#82c98a"/><rect x=".5" y=".5" width="6" height="6" fill="none" stroke="#2a9aa8" stroke-width=".8"/><rect x="9" y=".5" width="6" height="6" fill="none" stroke="#e5a83a" stroke-width=".8"/><rect x=".5" y="9" width="6" height="6" fill="none" stroke="#7a7876" stroke-width=".8"/><rect x="9" y="9" width="6" height="6" fill="none" stroke="#4fa85a" stroke-width=".8"/></svg>
<div class="t tn" style="left:458px;top:886px;font-size:11.57px">Parent Gallery</div>
<svg style="left:543px;top:874px" width="10" height="35" viewBox="0 0 10 35"><path d="M.5 0L9.500 17.500.5 35" fill="none" stroke="#e1dfdd" stroke-width="1"/></svg>
<svg style="left:562px;top:884px" width="17" height="17" viewBox="0 0 17 17"><circle cx="3.800" cy="3.800" r="3" fill="none" stroke="#3b3a39" stroke-width="1.100"/><path d="M1.700 1.700l4.200 4.200" stroke="#3b3a39" stroke-width="1.100"/><path d="M12.500 7.200L9.700 4.300a1.600 1.600 0 0 1 2.300-2.300l.5.500.5-.5a1.600 1.600 0 0 1 2.300 2.300z" fill="none" stroke="#d8442f" stroke-width="1.100"/><path d="M3.800 9.500v7M.3 13h7" stroke="#2e8b2e" stroke-width="1.200"/><path d="M9.500 12.500a3 3 0 0 1 5.500-1.500M15.500 13.500a3 3 0 0 1-5.500 1.500" fill="none" stroke="#3b3a39" stroke-width="1.300"/><path d="M15.800 9v2.600h-2.600zM9.200 17v-2.600h2.600z" fill="#3b3a39"/></svg>
<div class="t tn" style="left:583px;top:886px;font-size:11.95px">Down arrow icon</div>
<div class="abs" style="left:1278px;top:892px;width:11px;height:1px;background:#605e5c"></div>
<div class="abs" style="left:1305px;top:891px;width:160px;height:2px;background:#4a4a4a"></div>
<div class="abs" style="left:1368px;top:888px;width:1px;height:9px;background:#4a4a4a"></div>
<div class="abs" style="left:1370px;top:885px;width:3px;height:14px;background:#3b3a39"></div>
<svg style="left:1478px;top:887px" width="11" height="11" viewBox="0 0 11 11"><path d="M5.500 0v11M0 5.500h11" stroke="#605e5c" stroke-width="1"/></svg>
<div class="t" style="left:1511px;top:887px;font-size:11px;color:#605e5c">80&nbsp; %</div>
<svg style="left:1565px;top:886px" width="14" height="14" viewBox="0 0 15 15"><path d="M1 14L14 1M8.500.8H14.200V6.500M.8 8.500V14.200H6.500" fill="none" stroke="#201f1e" stroke-width="1.400"/></svg>

</div>
</body>
</html>
